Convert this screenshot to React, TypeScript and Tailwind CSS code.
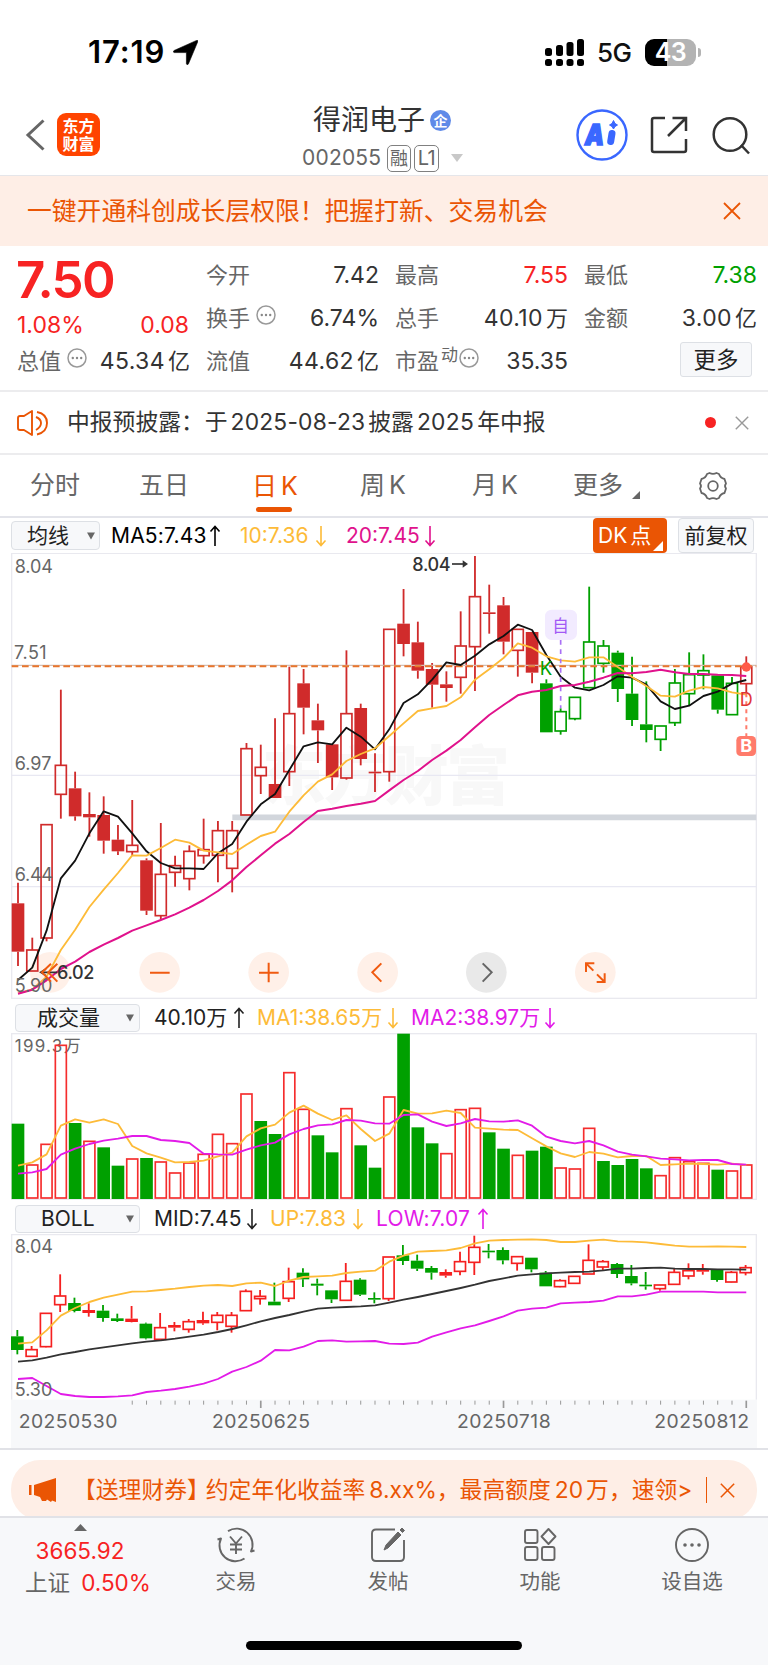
import React from "react";

const INK = "#333333";
const STEP = 42.84;
const cx = (i: number, off = 0) => 54 + STEP * i + off;

// [high, body top, body bottom, low, kind]; upper-case kinds are solid bodies
type Candle = [number, number, number, number, string];

const DAILY: Candle[] = [
  [1028, 1090, 1235, 1278, "R"], [1193, 1230, 1293, 1293, "r"], [854, 854, 1194, 1204, "r"], [449, 676, 763, 836, "r"],
  [695, 745, 829, 842, "R"], [757, 822, 832, 890, "R"], [769, 825, 902, 941, "R"], [855, 899, 934, 945, "R"],
  [780, 916, 935, 948, "r"], [955, 961, 1112, 1125, "R"], [849, 1003, 1127, 1138, "r"], [947, 977, 997, 1040, "r"],
  [916, 934, 1016, 1051, "r"], [836, 929, 947, 971, "r"], [843, 872, 946, 1027, "r"], [843, 872, 985, 1057, "r"],
  [609, 626, 825, 825, "r"], [614, 682, 707, 762, "r"], [535, 732, 774, 774, "R"], [380, 521, 695, 738, "r"],
  [387, 430, 503, 583, "R"], [491, 541, 571, 669, "R"], [613, 613, 712, 750, "R"], [331, 521, 714, 719, "r"],
  [491, 504, 657, 676, "R"], [640, 695, 700, 756, "R"], [268, 268, 695, 725, "r"], [147, 251, 312, 349, "R"],
  [245, 307, 392, 416, "R"], [369, 387, 434, 503, "R"], [394, 433, 444, 485, "R"], [214, 318, 412, 461, "r"],
  [48, 170, 320, 453, "r"], [134, 217, 222, 281, "R"], [171, 196, 305, 343, "R"], [268, 268, 331, 410, "r"],
  [276, 276, 398, 430, "R"], [418, 430, 577, 577, "G"], [505, 515, 573, 584, "g"], [472, 472, 536, 541, "g"],
  [140, 306, 443, 443, "g"], [300, 318, 370, 398, "g"], [332, 338, 447, 486, "G"], [350, 461, 540, 558, "G"],
  [424, 553, 570, 607, "G"], [558, 558, 598, 633, "g"], [387, 429, 548, 558, "g"], [337, 404, 461, 498, "g"],
  [343, 392, 405, 448, "g"], [406, 406, 509, 521, "G"], [411, 430, 524, 524, "g"], [349, 380, 431, 458, "r"],
];
const MA5 = [1320, 1283, 1172, 1015, 962, 880, 814, 830, 880, 934, 969, 985, 985, 987, 940, 912, 845, 793, 762, 690, 619, 607, 613, 563, 590, 628, 568, 489, 463, 419, 367, 375, 347, 313, 288, 254, 270, 345, 410, 443, 451, 435, 409, 413, 434, 484, 507, 497, 468, 455, 431, 420];
const MA10 = [1360, 1348, 1310, 1230, 1169, 1101, 1049, 999, 946, 947, 924, 899, 908, 932, 937, 942, 914, 888, 875, 815, 766, 725, 703, 663, 642, 625, 588, 550, 513, 505, 498, 472, 419, 388, 354, 310, 323, 349, 361, 365, 352, 352, 381, 411, 438, 467, 470, 452, 441, 445, 457, 464];
const MA20 = [1361, 1349, 1321, 1287, 1265, 1236, 1214, 1194, 1172, 1156, 1140, 1123, 1103, 1080, 1053, 1021, 981, 946, 911, 882, 846, 813, 806, 798, 791, 783, 751, 720, 693, 660, 632, 600, 562, 525, 495, 466, 455, 450, 438, 435, 425, 413, 399, 400, 396, 389, 397, 402, 402, 404, 405, 408];

const VOLUME: [number, string][] = [
  [372, "G"], [496, "r"], [434, "r"], [137, "r"], [370, "G"], [425, "r"], [443, "G"], [498, "G"], [478, "r"], [475, "G"],
  [487, "r"], [520, "r"], [490, "r"], [464, "r"], [404, "r"], [432, "r"], [283, "r"], [364, "G"], [403, "G"], [219, "r"],
  [329, "r"], [407, "G"], [458, "G"], [327, "r"], [437, "G"], [504, "G"], [292, "r"], [102, "G"], [383, "G"], [431, "G"],
  [462, "r"], [330, "r"], [326, "r"], [398, "G"], [447, "G"], [467, "r"], [453, "G"], [441, "G"], [505, "r"], [508, "r"],
  [386, "r"], [484, "G"], [496, "G"], [478, "G"], [506, "G"], [528, "r"], [474, "r"], [486, "r"], [491, "r"], [510, "G"],
  [514, "r"], [496, "r"],
];
const VMA1 = [498, 488, 464, 378, 359, 369, 359, 373, 439, 461, 474, 488, 487, 483, 470, 459, 410, 386, 375, 339, 318, 342, 361, 347, 388, 424, 402, 331, 342, 341, 333, 340, 384, 387, 390, 391, 416, 440, 461, 472, 457, 462, 473, 469, 469, 496, 494, 492, 493, 495, 492, 496];
const VMA2 = [522, 518, 508, 465, 447, 433, 423, 417, 409, 409, 421, 424, 430, 462, 464, 465, 450, 437, 429, 404, 388, 377, 374, 361, 363, 371, 372, 346, 344, 366, 379, 371, 358, 365, 366, 362, 378, 411, 424, 431, 424, 437, 456, 465, 470, 477, 479, 482, 481, 481, 493, 495];

const BOLL: Candle[] = [
  [990, 1009, 1050, 1063, "G"], [1038, 1049, 1069, 1069, "r"], [940, 940, 1040, 1042, "r"], [823, 888, 914, 936, "r"],
  [893, 909, 933, 937, "G"], [910, 930, 939, 950, "R"], [915, 932, 954, 965, "G"], [941, 955, 963, 966, "G"],
  [918, 956, 966, 967, "R"], [968, 971, 1015, 1018, "G"], [939, 983, 1018, 1020, "r"], [966, 975, 983, 994, "R"],
  [957, 965, 988, 998, "r"], [935, 960, 970, 974, "R"], [936, 946, 967, 991, "r"], [936, 946, 979, 998, "r"],
  [868, 874, 932, 932, "r"], [870, 889, 896, 914, "r"], [848, 905, 916, 916, "G"], [803, 845, 895, 906, "r"],
  [805, 818, 838, 861, "G"], [836, 851, 857, 886, "G"], [871, 871, 898, 909, "G"], [789, 844, 901, 901, "r"],
  [835, 839, 884, 888, "G"], [877, 894, 899, 910, "G"], [771, 771, 896, 903, "r"], [735, 766, 783, 795, "G"],
  [764, 782, 806, 813, "G"], [798, 804, 818, 839, "G"], [808, 816, 827, 833, "R"], [755, 785, 814, 826, "r"],
  [707, 742, 787, 825, "r"], [732, 752, 757, 775, "G"], [742, 750, 781, 793, "G"], [770, 770, 790, 812, "r"],
  [773, 773, 808, 817, "G"], [813, 818, 859, 859, "G"], [838, 842, 860, 862, "r"], [829, 829, 850, 850, "r"],
  [733, 781, 822, 822, "r"], [780, 785, 801, 810, "r"], [789, 792, 822, 834, "G"], [795, 828, 850, 856, "G"],
  [816, 854, 859, 869, "G"], [855, 855, 866, 872, "r"], [806, 817, 853, 855, "r"], [790, 812, 828, 838, "r"],
  [792, 807, 815, 824, "R"], [810, 810, 840, 845, "G"], [813, 817, 846, 847, "r"], [795, 803, 818, 826, "r"],
];
const UP = [1031, 1027, 991, 947, 924, 906, 893, 884, 875, 874, 870, 866, 861, 857, 855, 858, 850, 848, 858, 842, 831, 829, 827, 819, 815, 812, 785, 767, 755, 753, 751, 744, 730, 722, 720, 719, 718, 720, 726, 726, 722, 719, 724, 725, 727, 732, 737, 740, 740, 739, 740, 741];
const MID = [1085, 1081, 1073, 1063, 1056, 1048, 1042, 1036, 1030, 1025, 1021, 1016, 1010, 1004, 996, 987, 976, 964, 954, 945, 935, 926, 923, 921, 919, 916, 908, 899, 891, 882, 873, 864, 854, 843, 835, 827, 823, 820, 818, 816, 815, 811, 806, 806, 804, 803, 806, 807, 807, 808, 808, 809];
const LOW = [1137, 1134, 1158, 1182, 1188, 1191, 1191, 1189, 1186, 1176, 1172, 1167, 1160, 1151, 1137, 1115, 1101, 1082, 1050, 1051, 1040, 1023, 1021, 1025, 1024, 1023, 1031, 1032, 1028, 1010, 997, 985, 976, 963, 949, 932, 926, 923, 910, 908, 906, 902, 889, 889, 884, 875, 875, 875, 875, 877, 877, 877];

function Line({ data, color, w = 5.5 }: { data: number[]; color: string; w?: number }) {
  return (
    <polyline
      points={data.map((y, i) => `${cx(i).toFixed(1)},${y}`).join(" ")}
      fill="none" stroke={color} strokeWidth={w} strokeLinejoin="round"
    />
  );
}

function Candles({ data, red, off = 0 }: { data: Candle[]; red: string; off?: number }) {
  return (
    <g>
      {data.map(([h, t, b, l, k], i) => {
        const c = k.toLowerCase() === "r" ? red : "#00a000";
        const solid = k === "R" || k === "G";
        const x = cx(i, off);
        return (
          <g key={i} stroke={c} strokeWidth={5.5}>
            {h < t && <path d={`M${x} ${h}V${t}`} />}
            {l > b && <path d={`M${x} ${b}V${l}`} />}
            {solid ? (
              <rect x={x - 19} y={t} width={38} height={b - t} fill={c} stroke="none" />
            ) : (
              <rect x={x - 16.5} y={t} width={33} height={b - t} fill="none" strokeWidth={5} />
            )}
          </g>
        );
      })}
    </g>
  );
}

function Ctext({ x, y, w, size = 54, fill = "#666666", weight = 400, children }: { x: number; y: number; w: number; size?: number; fill?: string; weight?: number; children: string }) {
  return (
    <text x={x - 2} y={y + 2} fontSize={size} fill={fill} fontWeight={weight} textLength={w + 4} lengthAdjust="spacing">{children}</text>
  );
}

function Arrow({ down = false, className }: { down?: boolean; className: string }) {
  return (
    <svg viewBox="0 0 12 22" className={`h-[22px] w-3 shrink-0 ${className}`} fill="none" stroke="currentColor" strokeWidth="1.6">
      <path d={down ? "M6 1V20.5M1.5 15.5L6 20.5L10.5 15.5" : "M6 21V1.5M1.5 6.5L6 1.5L10.5 6.5"} />
    </svg>
  );
}

function Close({ className }: { className: string }) {
  return (
    <svg viewBox="0 0 18 18" className={className} fill="none" stroke="currentColor" strokeWidth="1.8">
      <path d="M1 1L17 17M17 1L1 17" />
    </svg>
  );
}

function Dots({ className }: { className: string }) {
  return (
    <svg viewBox="0 0 20 20" className={`h-5 w-5 shrink-0 ${className}`} fill="none" stroke="#999" strokeWidth="1.5">
      <circle cx="10" cy="10" r="9" />
      <g fill="#888" stroke="none"><circle cx="5.8" cy="10" r="1.2" /><circle cx="10" cy="10" r="1.2" /><circle cx="14.2" cy="10" r="1.2" /></g>
    </svg>
  );
}

function Stat({ label, value, color = "text-[#333]", extra }: { label: string; value: string; color?: string; extra?: React.ReactNode }) {
  const m = value.match(/^([\d.%]+)(.*)$/)!;
  return (
    <div className="flex h-[43px] items-center justify-between">
      <div className="flex items-center text-[22px] text-[#666]">{label}{extra}</div>
      <div className={`-mr-px flex items-center text-[23px] ${color}`}>
        {m[2] ? <span className="tracking-[0.4px]">{m[1]}</span> : m[1]}
        {m[2] && <span className="ml-[3px] text-[22px]">{m[2]}</span>}
      </div>
    </div>
  );
}

function Selector({ label, className, tri }: { label: string; className: string; tri: string }) {
  return (
    <div className={`flex shrink-0 items-center rounded-[4px] border border-[#dde0e5] bg-[#f7f8fa] text-[21px] text-[#222] ${className}`}>
      <span>{label}</span>
      <svg viewBox="0 0 8 8" className={`h-2 w-2 ${tri}`}><path d="M0 0.5H8L4 7.5Z" fill="#666" /></svg>
    </div>
  );
}

function StatusBar() {
  return (
    <div className="flex h-24 items-center pt-[9px] pl-[88px]">
      <div className="w-[85px] text-[31px] font-semibold tracking-[0.9px] text-black">17:19</div>
      <svg viewBox="0 0 25 25" className="h-[25px] w-[25px]"><path d="M23.6 0.4C24.5 0 25.2 0.7 24.8 1.6L15.4 24C14.9 25 13.4 24.8 13.4 23.6V12.6H1.5C0.2 12.6 0 11 1.1 10.5Z" fill="#000" stroke="#000" strokeWidth="0.6" /></svg>
      <svg viewBox="0 0 40 27" className="ml-[347px] h-[27px] w-10" fill="#000">
        <rect x="0" y="9" width="7" height="8" rx="2.5" /><rect x="11" y="6" width="7" height="11" rx="2.5" /><rect x="21.5" y="3" width="7" height="14" rx="2.5" /><rect x="32" y="0" width="7" height="17" rx="2.5" />
        <rect x="0" y="20" width="7" height="7" rx="2.5" /><rect x="11" y="20" width="7" height="7" rx="2.5" /><rect x="21.5" y="20" width="7" height="7" rx="2.5" /><rect x="32" y="20" width="7" height="7" rx="2.5" />
      </svg>
      <div className="ml-[12px] w-[48px] text-[26px] font-medium tracking-[-0.6px] text-[#111]">5G</div>
      <div className="flex h-[27px] w-[51px] items-center justify-center rounded-[9px] bg-[linear-gradient(90deg,#000_43%,#b3b3b3_43%)] text-[25px] leading-none font-semibold tracking-[-0.5px] text-white">43</div>
      <div className="ml-[2px] h-[9px] w-[3px] rounded-r-full bg-[#b3b3b3]" />
    </div>
  );
}

function Header() {
  return (
    <header className="flex h-[80px] items-start border-b border-[#e5e6ea]">
      <svg viewBox="0 0 20 32" className="mt-[23px] ml-[25px] h-8 w-5" fill="none" stroke="#666" strokeWidth="3"><path d="M18.5 1.5L3 16L18.5 30.5" /></svg>
      <div className="mt-[17px] ml-[12px] flex h-[43px] w-[43px] flex-col items-center justify-center rounded-[9px] bg-[#ff4400] pt-px text-[16px] leading-[18px] font-semibold text-white"><span>东方</span><span>财富</span></div>
      <div className="ml-[202px] flex w-[162px] flex-col">
        <div className="mt-[4px] flex h-[40px] items-center pl-[11px] text-[28px] text-[#333]">
          得润电子
          <span className="ml-[5px] flex h-[21px] w-[21px] items-center justify-center rounded-full bg-[#5f8ae8] text-[14px] font-bold text-white">企</span>
        </div>
        <div className="mt-[4px] flex h-[28px] items-center text-[21px] text-[#666]">
          <span className="w-[85px] tracking-[0.2px]">002055</span>
          <span className="flex h-[27px] w-[24px] items-center justify-center rounded-[5px] border-[1.5px] border-[#808080] text-[18px]">融</span>
          <span className="ml-[3px] flex h-[27px] w-[25px] items-center justify-center rounded-[5px] border-[1.5px] border-[#808080] text-[20px] tracking-[-0.5px]">L1</span>
          <svg viewBox="0 0 12 8" className="ml-[12px] h-2 w-3"><path d="M0 0H12L6 8Z" fill="#c8c8c8" /></svg>
        </div>
      </div>
      <svg viewBox="0 0 52 52" className="mt-[13px] ml-[112px] h-[52px] w-[52px]" fill="#3a67ff">
        <circle cx="26" cy="26" r="24.5" fill="none" stroke="#3a67ff" strokeWidth="2.4" />
        <text x="9" y="36" fontSize="29" fontWeight="900" fontStyle="italic" stroke="#3a67ff" strokeWidth="1.6" textLength="19" lengthAdjust="spacingAndGlyphs">A</text>
        <path d="M36 24.5L34.7 32.5" fill="none" stroke="#3a67ff" strokeWidth="7" strokeLinecap="round" />
        <path d="M37.5 11.5L39 14.5L41.5 16L39 17.5L37.5 20L36 17.5L33.5 16L36 14.5Z" stroke="#3a67ff" strokeWidth="1" />
      </svg>
      <svg viewBox="0 0 38 38" className="mt-[20px] ml-[22px] h-[38px] w-[38px]" fill="none" stroke="#333" strokeWidth="2.5">
        <path d="M15 2H4Q2 2 2 4V34Q2 36 4 36H34Q36 36 36 34V23M22.5 2H36V15M36 2L18 20" />
      </svg>
      <svg viewBox="0 0 40 40" className="mt-[20px] ml-[24px] h-10 w-10" fill="none" stroke="#333" strokeWidth="2.5"><circle cx="18" cy="18.5" r="16.3" /><path d="M29 29L37 37.5" /></svg>
    </header>
  );
}

function Quote() {
  return (
    <section className="flex h-[146px] border-b-2 border-[#ececee] pl-[17px]">
      <div className="w-[172px] text-[#f72323]">
        <div className="-ml-px flex h-[65px] items-center pt-[3px] text-[51px] font-semibold tracking-[-1.6px]">7.50</div>
        <div className="flex h-[28px] items-center justify-between text-[23px]"><span>1.08%</span><span>0.08</span></div>
        <div className="pt-px"><Stat label="总值" value="45.34亿" extra={<Dots className="-mt-2 ml-[6px]" />} /></div>
      </div>
      <div className="ml-[17px] w-[172px] pt-[8px]">
        <Stat label="今开" value="7.42" />
        <Stat label="换手" value="6.74%" extra={<Dots className="-mt-2 ml-[6px]" />} />
        <Stat label="流值" value="44.62亿" />
      </div>
      <div className="ml-[17px] w-[172px] pt-[8px]">
        <Stat label="最高" value="7.55" color="text-[#f72323]" />
        <Stat label="总手" value="40.10万" />
        <Stat label="市盈" value="35.35" extra={<><span className="-mt-3 ml-[2px] text-[17px]">动</span><Dots className="-mt-2 ml-[1px]" /></>} />
      </div>
      <div className="ml-[17px] w-[172px] pt-[8px]">
        <Stat label="最低" value="7.38" color="text-[#00a000]" />
        <Stat label="金额" value="3.00亿" />
        <div className="mt-[2px] ml-[96px] flex h-[35px] w-[72px] items-center justify-center rounded-[3px] border border-[#dde0e5] bg-[#f7f8fa] text-[22.5px] text-[#222]">更多</div>
      </div>
    </section>
  );
}

function Tabs() {
  return (
    <nav className="flex h-[63px] items-center border-b-2 border-[#e3e4ea] pt-px text-[25px] text-[#666]">
      <span className="ml-[30px] w-[109px]">分时</span>
      <span className="w-[113px]">五日</span>
      <span className="flex w-[108px] flex-col self-start pt-[11px] text-[#ea5504]">
        <span className="flex h-[39px] items-center">日<span className="ml-[4px]">K</span></span>
        <span className="mt-px ml-[4px] h-[5px] w-[36px] rounded-full bg-[#ea5504]" />
      </span>
      <span className="w-[112px]">周<span className="ml-[4px]">K</span></span>
      <span className="w-[101px]">月<span className="ml-[4px]">K</span></span>
      <span>更多</span>
      <svg viewBox="0 0 8 8" className="mt-[18px] ml-[9px] h-2 w-2"><path d="M8 0V8H0Z" fill="#666" /></svg>
      <svg viewBox="0 0 30 30" className="ml-[58px] h-[30px] w-[30px]" fill="none" stroke="#666" strokeWidth="1.8" strokeLinejoin="round">
        <path d="M11.5 2Q15 3.8 18.5 2L21 3Q22.2 7 26.5 8L28 12.5Q26 15 28 17.5L26.5 22Q22.2 23 21 27L18.5 28Q15 26.2 11.5 28L9 27Q7.8 23 3.5 22L2 17.5Q4 15 2 12.5L3.5 8Q7.8 7 9 3Z" />
        <circle cx="15" cy="15" r="4.8" />
      </svg>
    </nav>
  );
}

function DailyChart() {
  return (
    <svg viewBox="33 39 2238 1338" className="ml-[11px] block h-[446px] w-[746px]">
      <rect x="35" y="40" width="2234" height="1335" fill="#fff" stroke="#e9e9ef" strokeWidth="4" />
      <text x="786" y="777" fontSize="192" fontWeight="900" fill="#f8f8f8" textLength="744">东方财富</text>
      <path d="M35 706H2269M35 1040H2269" stroke="#e8e8f2" strokeWidth="4" />
      <path d="M697 832H2269" stroke="#d2d6dc" strokeWidth="17" />
      <circle cx="151" cy="1297" r="61" fill="#fff0e8" />
      <Candles data={DAILY} red="#d02b2b" />
      <path d="M35 376H2269" stroke="#d3c0b6" strokeWidth="4" />
      <path d="M35 379H2269" stroke="#e8752c" strokeWidth="6" strokeDasharray="20 11" />
      <Line data={MA5} color="#111" />
      <Line data={MA10} color="#fdbb38" />
      <Line data={MA20} color="#e0128c" w={6} />
      <Ctext x={46} y={97} w={111}>8.04</Ctext>
      <Ctext x={44} y={356} w={94}>7.51</Ctext>
      <Ctext x={46} y={689} w={106}>6.97</Ctext>
      <Ctext x={46} y={1022} w={111}>6.44</Ctext>
      <Ctext x={46} y={1355} w={109}>5.90</Ctext>
      <Ctext x={1239} y={91} w={111} fill={INK} weight={500}>8.04</Ctext>
      <path d="M1356 72H1398" stroke={INK} strokeWidth="5" /><path d="M1388 61L1404 72L1388 83Z" fill={INK} />
      <g fill="#fff0e8">
        <circle cx="479" cy="1297" r="61" /><circle cx="806" cy="1297" r="61" /><circle cx="1133" cy="1297" r="61" />
        <circle cx="1459" cy="1297" r="61" fill="#e9e9e9" /><circle cx="1786" cy="1297" r="61" />
      </g>
      <path d="M124 1297H172M138 1287L122 1297L138 1307" fill="none" stroke={INK} strokeWidth="5" />
      <Ctext x={173} y={1314} w={108} fill={INK} weight={500}>6.02</Ctext>
      <g fill="none" stroke="#f05a10" strokeWidth="6">
        <path d="M153 1271L126 1297L153 1325M172 1271L145 1297L172 1325" />
        <path d="M450 1298H509M777 1298H836M806 1268V1327M1144 1270L1117 1297L1144 1325" />
        <path d="M1448 1270L1475 1297L1448 1325" stroke="#666" />
        <path d="M1783 1270H1758V1296M1758 1270L1780 1292M1790 1326H1814V1300M1814 1326L1791 1303" />
      </g>
      <path d="M1682 300V505" stroke="#a970f5" strokeWidth="5" strokeDasharray="14 14" />
      <rect x="1635" y="209" width="96" height="91" rx="20" fill="#f2ebff" />
      <text x="1657" y="276" fontSize="50" fill="#a259f5">自</text>
      <text x="1619" y="405" fontSize="56" fill="#00a000">K</text>
      <path d="M2239 460V588" stroke="#ff7b6b" strokeWidth="6" strokeDasharray="12 12" />
      <text x="2219" y="499" fontSize="54" fill="#e03535">D</text>
      <circle cx="2239" cy="381" r="14" fill="#ff5a48" />
      <rect x="2209" y="588" width="59" height="60" rx="13" fill="#ff7b6b" />
      <text x="2239" y="637" fontSize="54" fontWeight="700" fill="#fff" textAnchor="middle">B</text>
    </svg>
  );
}

function VolumeChart() {
  return (
    <svg viewBox="33 100 2238 501" className="ml-[11px] block h-[167px] w-[746px]">
      <rect x="35" y="102" width="2234" height="497" fill="#fff" stroke="#e9e9ef" strokeWidth="4" />
      <Ctext x={46} y={155} w={194} size={51}>199.3万</Ctext>
      {VOLUME.map(([t, k], i) =>
        k === "G" ? (
          <rect key={i} x={cx(i) - 19} y={t} width={38} height={598 - t} fill="#00a000" />
        ) : (
          <rect key={i} x={cx(i) - 16.5} y={t} width={33} height={595 - t} fill="none" stroke="#f52d2d" strokeWidth={5} />
        )
      )}
      <Line data={VMA1} color="#fdbb38" />
      <Line data={VMA2} color="#e21be8" />
    </svg>
  );
}

function BollChart() {
  return (
    <svg viewBox="33 702 2238 642" className="ml-[11px] block h-[214px] w-[746px]">
      <path d="M35 1199V704H2269V1199" fill="#fff" stroke="#e9e9ef" strokeWidth="4" />
      <rect x="33" y="1199" width="2238" height="151" fill="#f7f8fa" />
      <Candles data={BOLL} red="#f52020" off={-2} />
      <Line data={UP} color="#fdbb38" />
      <Line data={MID} color="#333" />
      <Line data={LOW} color="#e21be8" />
      <Ctext x={46} y={756} w={111}>8.04</Ctext>
      <Ctext x={46} y={1187} w={109}>5.30</Ctext>
      {Array.from({ length: 44 }, (_, k) => k + 8).map((i) => (
        <path key={i} d={`M${cx(i)} 1202V${i % 17 === 0 ? 1224 : 1214}`} stroke="#999" strokeWidth={i % 17 === 0 ? 5 : 3} />
      ))}
      <Ctext x={58} y={1282} w={292} size={58}>20250530</Ctext>
      <Ctext x={638} y={1282} w={290} size={58}>20250625</Ctext>
      <Ctext x={1373} y={1282} w={277} size={58}>20250718</Ctext>
      <Ctext x={1965} y={1282} w={280} size={58}>20250812</Ctext>
    </svg>
  );
}

function NavItem({ label, children }: { label: string; children: React.ReactNode }) {
  return (
    <div className="flex w-[152px] flex-col items-center text-[20.5px] text-[#666]">
      <svg viewBox="0 0 40 36" className="mt-[9px] h-[36px] w-10" fill="none" stroke="#666" strokeWidth="1.9" strokeLinejoin="round">{children}</svg>
      <span className="mt-[4px] leading-[30px]">{label}</span>
    </div>
  );
}

export default function App() {
  return (
    <div className="h-[1665px] w-[768px] overflow-hidden bg-white font-['Inter','Noto_Sans_CJK_SC',sans-serif] whitespace-nowrap">
      <StatusBar />
      <Header />
      <div className="flex h-[70px] items-center justify-between bg-[#feeee6] pt-px pr-[27px] pl-[27px] text-[24.8px] text-[#ea5504]">
        <span>一键开通科创成长层权限！把握打新、交易机会</span>
        <Close className="-mt-px h-[18px] w-[18px]" />
      </div>
      <Quote />
      <div className="flex h-[63px] items-center border-b-2 border-[#ececee] pl-[17px] text-[22.8px] text-[#333]">
        <svg viewBox="0 0 32 26" className="h-[26px] w-8" fill="none" stroke="#ea5504" strokeWidth="1.9" strokeLinejoin="round">
          <path d="M15 1L7 6H3Q1 6 1 8V18Q1 20 3 20H7L15 25ZM19 7Q24 9 24 13Q24 17 19 20M20 2Q30 4 30 13Q30 22 20 24.5" />
        </svg>
        <span className="ml-[18px]">中报预披露：</span>
        <span className="ml-px">于</span><span className="ml-[3px] tracking-[0.2px]">2025-08-23</span><span className="ml-[3px]">披露</span><span className="ml-[3px] tracking-[0.3px]">2025</span><span className="ml-[3px]">年中报</span>
        <span className="ml-auto h-[11px] w-[11px] rounded-full bg-[#f72323]" />
        <Close className="mr-[19px] ml-[19px] h-[14px] w-[14px] text-[#999]" />
      </div>
      <Tabs />
      <div className="flex h-[35px] items-center text-[21px]">
        <Selector label="均线" className="ml-[11px] h-[29px] w-[89px] pl-[15px]" tri="ml-[18px]" />
        <span className="ml-[11px] w-[98px] tracking-[0.2px] text-black">MA5:7.43</span><Arrow className="text-black" />
        <span className="ml-[19px] w-[75px] text-[#fdbb38]">10:7.36</span><Arrow down className="text-[#fdbb38]" />
        <span className="ml-[19px] w-[78px] text-[#e0128c]">20:7.45</span><Arrow down className="text-[#e0128c]" />
        <div className="ml-auto flex h-[35px] w-[74px] items-center gap-[3px] rounded-[4px] bg-[#ea5504] pl-[5px] text-white">
          <span>DK</span><span>点</span>
          <svg viewBox="0 0 10 10" className="mt-[20px] -ml-[1px] h-[10px] w-[10px] shrink-0"><path d="M10 0V10H0Z" fill="#fff" /></svg>
        </div>
        <div className="mr-[14px] ml-[11px] flex h-[35px] w-[76px] items-center justify-center rounded-[4px] border border-[#dde0e5] bg-[#f7f8fa] text-[#222]">前复权</div>
      </div>
      <DailyChart />
      <div className="flex h-[34px] items-center pt-[3px] text-[21px]">
        <Selector label="成交量" className="ml-[15px] h-[28px] w-[125px] pl-[21px]" tri="ml-[26px]" />
        <span className="ml-[14px] w-[79px] text-[#222]">40.10万</span><Arrow className="text-[#222]" />
        <span className="ml-[12px] w-[130px] text-[#fdbb38]">MA1:38.65万</span><Arrow down className="text-[#fdbb38]" />
        <span className="ml-[12px] w-[133px] text-[#e21be8]">MA2:38.97万</span><Arrow down className="text-[#e21be8]" />
      </div>
      <VolumeChart />
      <div className="flex h-[34px] items-center pt-[3px] text-[21px]">
        <Selector label="BOLL" className="ml-[15px] h-[28px] w-[125px] pl-[25px]" tri="ml-[31px]" />
        <span className="ml-[14px] w-[92px] text-[#222]">MID:7.45</span><Arrow down className="text-[#222]" />
        <span className="ml-[12px] w-[82px] text-[#fdbb38]">UP:7.83</span><Arrow down className="text-[#fdbb38]" />
        <span className="ml-[12px] w-[101px] tracking-[0.2px] text-[#e21be8]">LOW:7.07</span><Arrow className="text-[#e21be8]" />
      </div>
      <BollChart />
      <div className="h-[70px] overflow-hidden border-y-2 border-[#e1e2e7] px-[11px] pt-[10px]">
        <div className="flex h-[60px] items-center rounded-[29px] bg-[#feeee6] pl-[18px] text-[22.8px] text-[#ea5504]">
          <svg viewBox="0 0 27 24" className="h-6 w-[27px]" fill="#ea5504"><path d="M0 7H2.5V17H0ZM5 7L27 0V24L23 22.5L22 24L18 21.5L17 23H13L11 19L5 17Z" /></svg>
          <span className="ml-[17px]">【送理财券】</span><span className="-ml-[4px]">约定年化收益率</span><span className="ml-[4px]">8.xx%，</span><span>最高额度</span><span className="ml-[4px]">20</span><span className="ml-[3px]">万，</span><span>速领&gt;</span>
          <span className="ml-auto h-[26px] w-[1.5px] bg-[#ea5504]" />
          <Close className="mr-[22px] ml-[13px] h-[15px] w-[15px]" />
        </div>
      </div>
      <footer className="flex h-[147px] flex-col bg-[#f7f8fa]">
        <div className="flex h-[123px]">
          <div className="flex w-[160px] flex-col items-center text-[22.5px] text-[#f72323]">
            <svg viewBox="0 0 13 7" className="mt-[6px] h-[7px] w-[13px]"><path d="M6.5 0L13 7H0Z" fill="#666" /></svg>
            <span className="mt-[4px] h-[32px] leading-[32px]">3665.92</span>
            <span className="flex h-[32px] items-center pl-[16px]"><span className="mr-[11px] text-[#666]">上证</span>0.50%</span>
          </div>
          <NavItem label="交易">
            <path d="M12 4.1A16 16 0 0 1 35 24.5L38.5 23.5M28.5 31.5A16 16 0 0 1 5 11.5L1.5 12.5" />
            <path d="M14 9.5L20 16.5L26 9.5M20 16.5V27M14 17.5H26M14 22.5H26" />
          </NavItem>
          <NavItem label="发帖">
            <path d="M27 2.5H8Q4 2.5 4 6.5V30Q4 34 8 34H32Q36 34 36 30V13" />
            <path d="M16 23L18 18L30 5L33 8L20 21ZM32 3L34 1L36.5 3.5L34.5 5.5Z" fill="#666" strokeWidth="1" />
          </NavItem>
          <NavItem label="功能">
            <rect x="5" y="3" width="12.5" height="13" rx="2" /><rect x="5" y="20" width="12.5" height="13" rx="2" /><rect x="22" y="20" width="12.5" height="13" rx="2" />
            <path d="M28.5 2L35.5 9.5L28.5 17L21.5 9.5Z" />
          </NavItem>
          <NavItem label="设自选">
            <circle cx="20" cy="18" r="16" />
            <g fill="#666" stroke="none"><circle cx="13" cy="18" r="1.8" /><circle cx="20" cy="18" r="1.8" /><circle cx="27" cy="18" r="1.8" /></g>
          </NavItem>
        </div>
        <div className="mx-auto h-[9px] w-[276px] rounded-full bg-black" />
      </footer>
    </div>
  );
}
